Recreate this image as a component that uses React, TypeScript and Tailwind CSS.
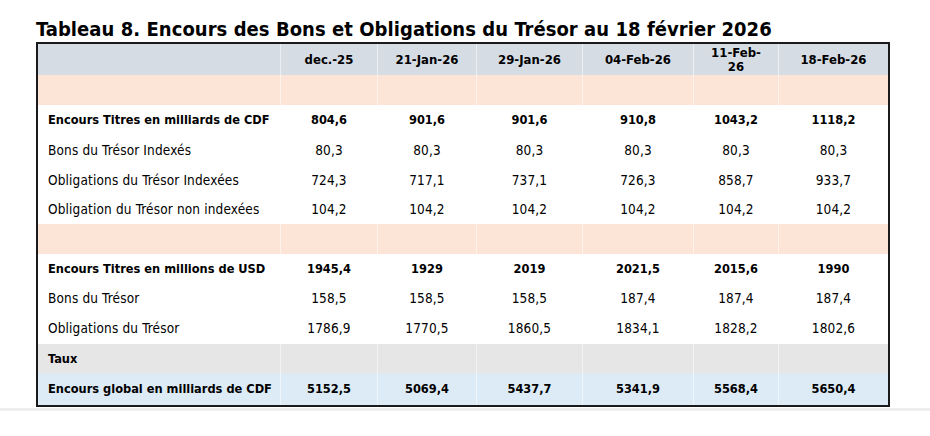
import React from 'react';

type Row = {
  label: string;
  values: string[];
  kind: 'bold' | 'plain' | 'peach' | 'taux' | 'total';
  h: string;
};

const columns = ['dec.-25', '21-Jan-26', '29-Jan-26', '04-Feb-26', '11-Feb-26', '18-Feb-26'];

const rows: Row[] = [
  { label: '', values: ['', '', '', '', '', ''], kind: 'peach', h: 'h-[30px]' },
  { label: 'Encours Titres en milliards de CDF', values: ['804,6', '901,6', '901,6', '910,8', '1043,2', '1118,2'], kind: 'bold', h: 'h-[30px]' },
  { label: 'Bons du Trésor Indexés', values: ['80,3', '80,3', '80,3', '80,3', '80,3', '80,3'], kind: 'plain', h: 'h-[30px]' },
  { label: 'Obligations du Trésor Indexées', values: ['724,3', '717,1', '737,1', '726,3', '858,7', '933,7'], kind: 'plain', h: 'h-[30px]' },
  { label: 'Obligation du Trésor non indexées', values: ['104,2', '104,2', '104,2', '104,2', '104,2', '104,2'], kind: 'plain', h: 'h-[29px]' },
  { label: '', values: ['', '', '', '', '', ''], kind: 'peach', h: 'h-[30px]' },
  { label: 'Encours Titres en millions de USD', values: ['1945,4', '1929', '2019', '2021,5', '2015,6', '1990'], kind: 'bold', h: 'h-[30px]' },
  { label: 'Bons du Trésor', values: ['158,5', '158,5', '158,5', '187,4', '187,4', '187,4'], kind: 'plain', h: 'h-[29px]' },
  { label: 'Obligations du Trésor', values: ['1786,9', '1770,5', '1860,5', '1834,1', '1828,2', '1802,6'], kind: 'plain', h: 'h-[31px]' },
  { label: 'Taux', values: ['', '', '', '', '', ''], kind: 'taux', h: 'h-[29px]' },
  { label: 'Encours global en milliards de CDF', values: ['5152,5', '5069,4', '5437,7', '5341,9', '5568,4', '5650,4'], kind: 'total', h: 'h-[32px]' },
];

const gridCols = 'grid grid-cols-[243px_97px_99px_106px_111px_85px_109px]';

const rowBg: Record<Row['kind'], string> = {
  bold: 'bg-white',
  plain: 'bg-white',
  peach: 'bg-[#fce4d6]',
  taux: 'bg-[#e7e6e6]',
  total: 'bg-[#ddebf7]',
};

function TableRow({ row }: { row: Row }) {
  const isBold = row.kind !== 'plain';
  const text = isBold ? 'font-bold text-[12.7px]' : 'font-normal text-[13.5px] tracking-[0.15px]';
  return (
    <div className={`${gridCols} ${row.h} ${rowBg[row.kind]}`}>
      <div className={`flex items-center pl-[10px] border-r border-white/50 ${text}`}>{row.label}</div>
      {row.values.map((v, i) => (
        <div
          key={i}
          className={`flex items-center justify-center ${text} ${
            i < row.values.length - 1 ? 'border-r border-white/50' : ''
          }`}
        >
          {v}
        </div>
      ))}
    </div>
  );
}

export default function App() {
  return (
    <div className="w-[930px] h-[436px] bg-white text-black font-['DejaVu_Sans_Condensed','DejaVu_Sans',sans-serif]">
      <div className="pl-[36px] pt-[17px]">
        <h1 className="text-[20px] font-bold leading-[24px] tracking-[0.05px]">
          Tableau 8. Encours des Bons et Obligations du Trésor au 18 février 2026
        </h1>
        <div className="mt-[1px] w-[854px] border-2 border-[#1a1a1a]">
          <div className={`${gridCols} h-[31px] bg-[#d6dce4]`}>
            <div className="border-r border-white/50" />
            {columns.map((c, i) => (
              <div
                key={c}
                className={`flex items-center justify-center text-center text-[13px] font-bold leading-[14px] ${
                  i < columns.length - 1 ? 'border-r border-white/50' : ''
                }`}
              >
                {c === '11-Feb-26' ? (
                  <span>
                    11-Feb-
                    <br />
                    26
                  </span>
                ) : (
                  c
                )}
              </div>
            ))}
          </div>
          {rows.map((r, i) => (
            <TableRow key={i} row={r} />
          ))}
        </div>
      </div>
      <div className="mt-[1px] h-[3px] w-full bg-[#eeeeee]" />
    </div>
  );
}
